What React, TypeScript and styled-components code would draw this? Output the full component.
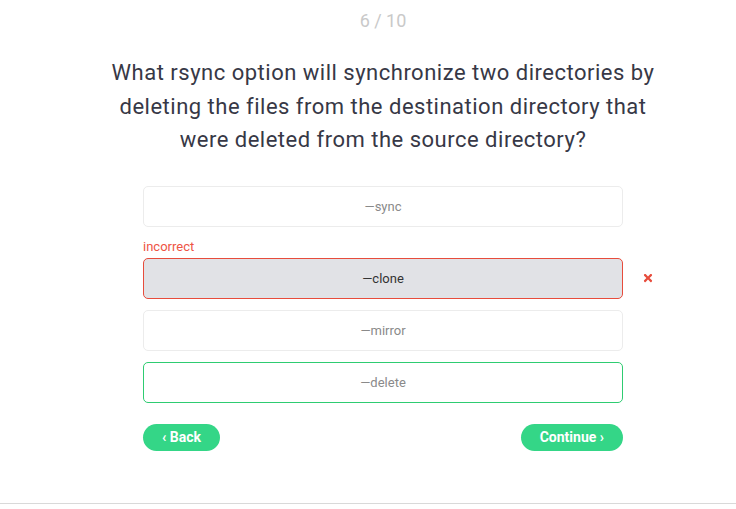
import styled, { createGlobalStyle } from "styled-components";
import { FaTimes } from "react-icons/fa";

const GlobalStyle = createGlobalStyle`
  html, body {
    margin: 0;
    padding: 0;
    background: #ffffff;
  }
  body {
    font-family: Roboto, "Liberation Sans", sans-serif;
  }
`;

const Page = styled.div`
  height: 504px;
  border-bottom: 1px solid #d9d9d9;
  padding-left: 30px;
  display: flex;
  flex-direction: column;
  align-items: center;
  box-sizing: border-box;
`;

const Counter = styled.div`
  margin-top: 10px;
  font-size: 18px;
  line-height: 22px;
  color: #c9c9c9;
`;

const Question = styled.h1`
  margin: 24px 0 0;
  width: 560px;
  text-align: center;
  font-size: 22px;
  font-weight: 400;
  letter-spacing: 0.5px;
  line-height: 33.5px;
  color: #373846;
`;

const Options = styled.div`
  margin-top: 29px;
  width: 480px;
  display: flex;
  flex-direction: column;
  gap: 11px;
`;

const Group = styled.div`
  display: flex;
  flex-direction: column;
`;

const Label = styled.div`
  font-size: 13px;
  line-height: 17px;
  margin-bottom: 3px;
  color: #ee5444;
`;

const Row = styled.div`
  position: relative;
`;

type State = "idle" | "wrong" | "right";

const Option = styled.button<{ $state: State }>`
  width: 100%;
  height: 41px;
  box-sizing: border-box;
  border-radius: 5px;
  font-family: inherit;
  font-size: 13px;
  display: flex;
  align-items: center;
  justify-content: center;
  cursor: pointer;
  border: 1px solid
    ${(p) =>
      p.$state === "wrong" ? "#e74c3c" : p.$state === "right" ? "#2ecc71" : "#ececec"};
  background: ${(p) => (p.$state === "wrong" ? "#e1e2e6" : "#ffffff")};
  color: ${(p) => (p.$state === "wrong" ? "#333333" : "#8a8a8a")};
`;

const Mark = styled.span`
  position: absolute;
  right: -31px;
  top: 50%;
  transform: translateY(-50%);
  display: flex;
  color: #e74c3c;
`;

const Nav = styled.div`
  margin-top: 21px;
  width: 480px;
  display: flex;
  justify-content: space-between;
`;

const NavButton = styled.button`
  height: 27px;
  padding: 0 19px;
  border: none;
  border-radius: 14px;
  background: #34d687;
  color: #ffffff;
  font-family: inherit;
  font-weight: 700;
  font-size: 14px;
  cursor: pointer;
`;

const options: { text: string; state: State; label?: string }[] = [
  { text: "—sync", state: "idle" },
  { text: "—clone", state: "wrong", label: "incorrect" },
  { text: "—mirror", state: "idle" },
  { text: "—delete", state: "right" },
];

export default function App() {
  return (
    <>
      <GlobalStyle />
      <Page>
        <Counter>6 / 10</Counter>
        <Question>
          What rsync option will synchronize two directories by deleting the
          files from the destination directory that were deleted from the
          source directory?
        </Question>
        <Options>
          {options.map((o) => (
            <Group key={o.text}>
              {o.label && <Label>{o.label}</Label>}
              <Row>
                <Option $state={o.state}>{o.text}</Option>
                {o.state === "wrong" && (
                  <Mark>
                    <FaTimes size={12} />
                  </Mark>
                )}
              </Row>
            </Group>
          ))}
        </Options>
        <Nav>
          <NavButton>‹ Back</NavButton>
          <NavButton>Continue ›</NavButton>
        </Nav>
      </Page>
    </>
  );
}
